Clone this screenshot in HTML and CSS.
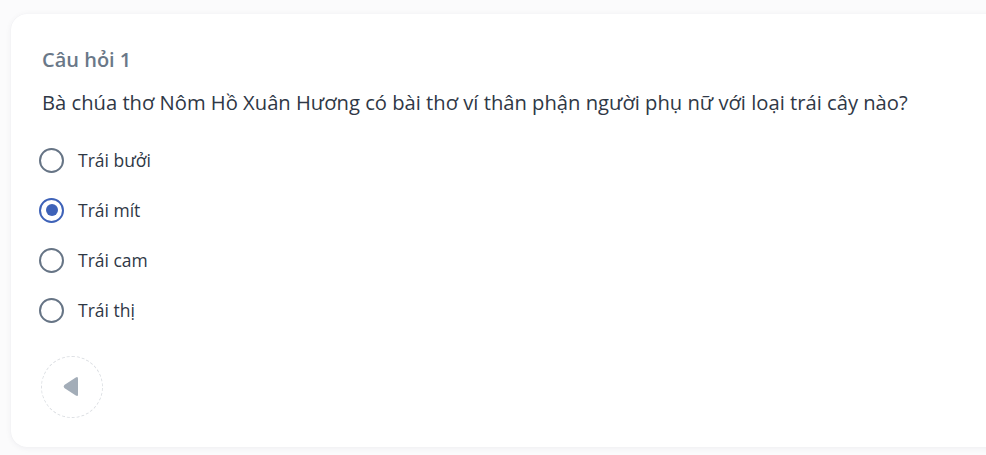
FILE: index.html
```html
<!DOCTYPE html>
<html lang="vi">
<head>
<meta charset="utf-8">
<link rel="stylesheet" href="styles.css">
</head>
<body>
<div class="page">
  <section class="card">
    <h2 class="title">Câu hỏi 1</h2>
    <p class="question">Bà chúa thơ Nôm Hồ Xuân Hương có bài thơ ví thân phận người phụ nữ với loại trái cây nào?</p>
    <ul class="options">
      <li class="option"><span class="radio"></span><span class="label">Trái bưởi</span></li>
      <li class="option selected"><span class="radio"></span><span class="label">Trái mít</span></li>
      <li class="option"><span class="radio"></span><span class="label">Trái cam</span></li>
      <li class="option"><span class="radio"></span><span class="label">Trái thị</span></li>
    </ul>
    <button class="back" type="button" aria-label="Quay lại">
      <svg class="back-icon" width="15" height="21" viewBox="0 0 15 21"><path d="M15 2.6 L15 18.4 Q15 21 12.8 19.6 L1.3 12 Q0 10.5 1.3 9 L12.8 1.4 Q15 0 15 2.6 Z" fill="#a3adb8"/></svg>
    </button>
  </section>
</div>
</body>
</html>
```
FILE: styles.css
```css
html, body {
  margin: 0;
  padding: 0;
}
body {
  background: #fbfbfc;
  font-family: "Open Sans", "Noto Sans", sans-serif;
  overflow: hidden;
  width: 986px;
  height: 455px;
}
.page {
  padding: 14px 0 0 11px;
}
.card {
  width: 1020px;
  height: 433px;
  box-sizing: border-box;
  background: #ffffff;
  border-radius: 16px;
  box-shadow: 0 1px 6px rgba(30, 40, 60, 0.06), 0 0 1px rgba(30, 40, 60, 0.05);
  padding: 34px 31px 0 31px;
}
.title {
  margin: 0;
  font-size: 20px;
  line-height: 24px;
  font-weight: 600;
  color: #6a7888;
}
.question {
  margin: 17px 0 0 0;
  font-size: 20.2px;
  line-height: 26px;
  color: #2f3846;
}
.options {
  list-style: none;
  margin: 33px 0 0 0;
  padding: 0;
  display: flex;
  flex-direction: column;
  gap: 26px;
}
.option {
  display: flex;
  align-items: center;
  height: 24px;
  gap: 14px;
  margin-left: -3px;
}
.radio {
  width: 25px;
  height: 25px;
  box-sizing: border-box;
  border: 2.5px solid #667485;
  border-radius: 50%;
  flex: none;
  display: flex;
  align-items: center;
  justify-content: center;
}
.option.selected .radio {
  border-color: #3e62b8;
}
.option.selected .radio::after {
  content: "";
  width: 12px;
  height: 12px;
  border-radius: 50%;
  background: #3e62b8;
}
.label {
  font-size: 17.5px;
  color: #2f3846;
  line-height: 24px;
}
.back {
  margin: 34px 0 0 -1px;
  width: 62px;
  height: 62px;
  border-radius: 50%;
  border: 1px dashed #dcdfe3;
  background: transparent;
  display: flex;
  align-items: center;
  justify-content: center;
  padding: 0;
}
.back-icon {
  margin: -2px 4px 0 0;
}
```
